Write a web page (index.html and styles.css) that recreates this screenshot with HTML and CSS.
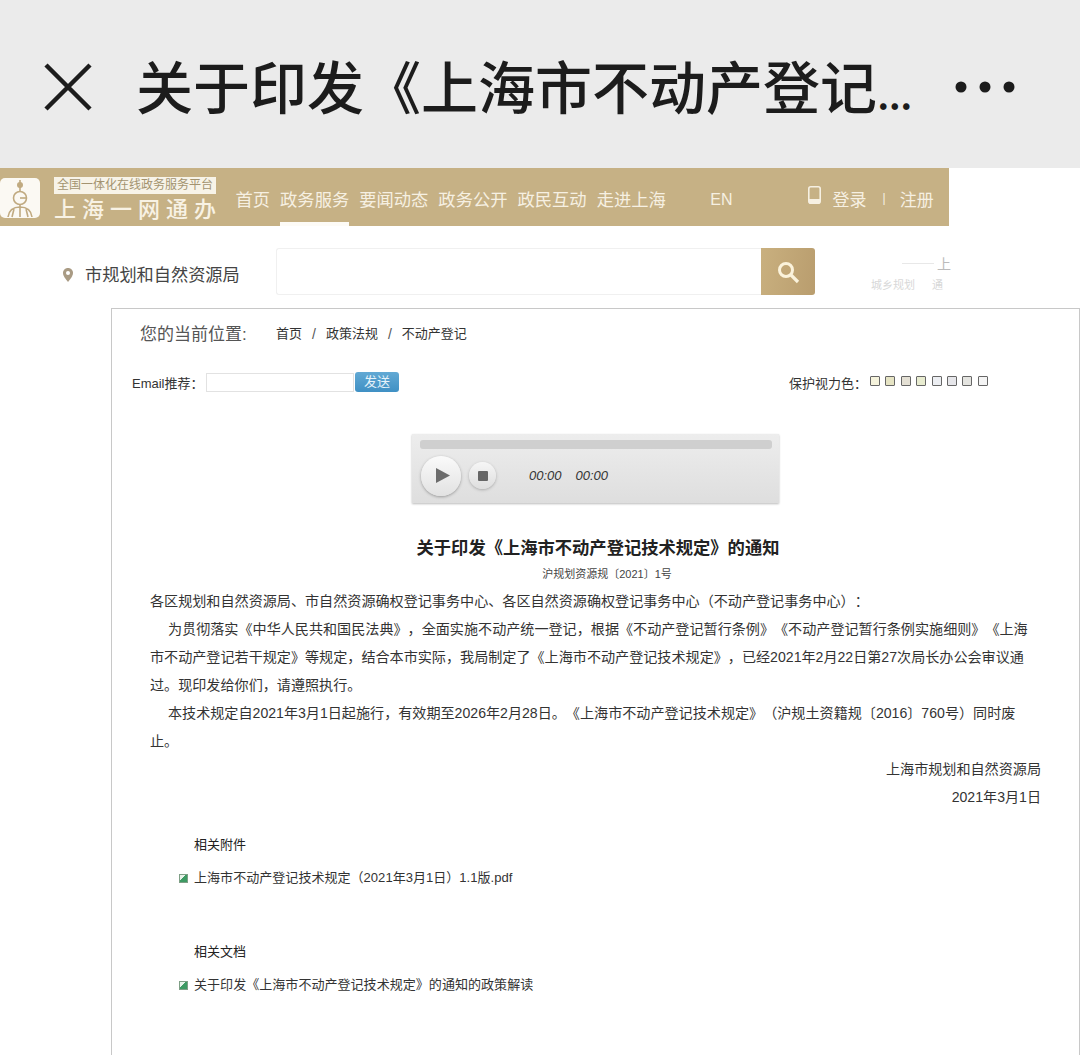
FILE: index.html
```html
<!DOCTYPE html>
<html lang="zh-CN">
<head>
<meta charset="utf-8">
<title>关于印发《上海市不动产登记技术规定》的通知</title>
<link rel="stylesheet" href="styles.css">
</head>
<body>
<div class="page">
  <header class="wx-bar">
    <svg class="wx-close" width="48" height="48" viewBox="0 0 48 48"><path d="M2 2 46 46M46 2 2 46" stroke="#1c1c1c" stroke-width="4.5" fill="none"/></svg>
    <h1 class="wx-title">关于印发《上海市不动产登记<span class="wx-dots">...</span></h1>
    <svg class="wx-more" width="60" height="12" viewBox="0 0 60 12"><circle cx="6" cy="6" r="5.5" fill="#1c1c1c"/><circle cx="30" cy="6" r="5.5" fill="#1c1c1c"/><circle cx="54" cy="6" r="5.5" fill="#1c1c1c"/></svg>
  </header>

  <nav class="site-nav">
    <div class="logo-mark">
      <svg width="40" height="40" viewBox="0 0 40 40">
        <rect width="40" height="40" rx="5" fill="#fbf9f3"/>
        <g fill="none" stroke="#c0aa80" stroke-width="1.6">
          <path d="M20 2V13"/>
          <circle cx="20" cy="7" r="2.2" fill="#c0aa80"/>
          <circle cx="20" cy="20" r="6.5"/>
          <path d="M20 20H27"/>
          <path d="M20 26V30"/>
          <path d="M8 39C9 32 14 29 20 29S31 32 32 39M20 29V39M14 31 12 39M26 31 28 39"/>
        </g>
      </svg>
    </div>
    <div class="logo-text">
      <div class="logo-label">全国一体化在线政务服务平台</div>
      <div class="logo-name">上海一网通办</div>
    </div>
    <ul class="nav-list">
      <li class="nav-item">首页</li>
      <li class="nav-item is-active">政务服务</li>
      <li class="nav-item">要闻动态</li>
      <li class="nav-item">政务公开</li>
      <li class="nav-item">政民互动</li>
      <li class="nav-item">走进上海</li>
    </ul>
    <span class="nav-en">EN</span>
    <svg class="nav-phone" width="13" height="18" viewBox="0 0 13 18"><rect x="0.8" y="0.8" width="11.4" height="16.4" rx="2" fill="none" stroke="#f6f0e2" stroke-width="1.6"/><rect x="1" y="13" width="11" height="4" fill="#f6f0e2"/></svg>
    <span class="nav-link">登录</span>
    <span class="nav-sep">|</span>
    <span class="nav-link">注册</span>
  </nav>

  <div class="search-row">
    <svg class="pin" width="10" height="14" viewBox="0 0 10 14"><path d="M5 0C2 0 0 2.200 0 5c0 3.500 5 9 5 9s5-5.500 5-9c0-2.800-2-5-5-5Z" fill="#a99b84"/><circle cx="5" cy="5" r="2" fill="#fff"/></svg>
    <span class="bureau">市规划和自然资源局</span>
    <div class="search-input"></div>
    <button class="search-btn" type="button" aria-label="搜索">
      <svg width="24" height="24" viewBox="0 0 24 24"><circle cx="10" cy="10" r="6.500" fill="none" stroke="#fbf3dc" stroke-width="3"/><path d="M15 15 22 22" stroke="#fbf3dc" stroke-width="3.200"/></svg>
    </button>
    <div class="ghost">
      <div class="ghost-top"><i class="ghost-line"></i>上</div>
      <div class="ghost-sub">城乡规划<span class="ghost-gap">通</span></div>
    </div>
  </div>

  <main class="doc">
    <div class="crumbs">
      <span class="crumbs-label">您的当前位置:</span>
      <span class="crumb">首页</span>
      <span class="crumb-sep">/</span>
      <span class="crumb">政策法规</span>
      <span class="crumb-sep">/</span>
      <span class="crumb">不动产登记</span>
    </div>

    <div class="tools">
      <label class="email-label">Email推荐：</label>
      <div class="email-input"></div>
      <button class="email-btn" type="button">发送</button>
      <span class="eye-label">保护视力色：</span>
      <div class="swatches">
        <i class="swatch s1"></i><i class="swatch s2"></i><i class="swatch s3"></i><i class="swatch s4"></i><i class="swatch s5"></i><i class="swatch s6"></i><i class="swatch s7"></i><i class="swatch s8"></i>
      </div>
    </div>

    <div class="player">
      <div class="player-track"></div>
      <div class="player-controls">
        <span class="play-btn"><svg width="14" height="15" viewBox="0 0 14 15"><path d="M0 0 14 7.500 0 15Z" fill="#6c6c6c"/></svg></span>
        <span class="stop-btn"><i class="stop-sq"></i></span>
        <span class="time time-a">00:00</span>
        <span class="time">00:00</span>
      </div>
    </div>

    <article class="article">
      <h2 class="art-title">关于印发《上海市不动产登记技术规定》的通知</h2>
      <p class="art-no">沪规划资源规〔2021〕1号</p>
      <p class="art-p">各区规划和自然资源局、市自然资源确权登记事务中心、各区自然资源确权登记事务中心（不动产登记事务中心）：</p>
      <p class="art-p indent">为贯彻落实《中华人民共和国民法典》，全面实施不动产统一登记，根据《不动产登记暂行条例》《不动产登记暂行条例实施细则》《上海市不动产登记若干规定》等规定，结合本市实际，我局制定了《上海市不动产登记技术规定》，已经2021年2月22日第27次局长办公会审议通过。现印发给你们，请遵照执行。</p>
      <p class="art-p indent">本技术规定自2021年3月1日起施行，有效期至2026年2月28日。《上海市不动产登记技术规定》（沪规土资籍规〔2016〕760号）同时废止。</p>
      <p class="art-p right">上海市规划和自然资源局</p>
      <p class="art-p right">2021年3月1日</p>
    </article>

    <section class="rel rel-a">
      <h3 class="rel-title">相关附件</h3>
      <div class="rel-item"><i class="rel-icon"></i>上海市不动产登记技术规定（2021年3月1日）1.1版.pdf</div>
    </section>
    <section class="rel rel-b">
      <h3 class="rel-title">相关文档</h3>
      <div class="rel-item"><i class="rel-icon"></i>关于印发《上海市不动产登记技术规定》的通知的政策解读</div>
    </section>
  </main>
</div>
</body>
</html>
```
FILE: styles.css
```css
* { box-sizing: border-box; }
html, body { margin: 0; padding: 0; background: #fff; }
body { font-family: "Liberation Sans", "Noto Sans CJK SC", sans-serif; color: #333; text-spacing-trim: space-all; }
.page { width: 1080px; height: 1055px; overflow: hidden; display: flex; flex-direction: column; }

.wx-bar { height: 168px; flex: none; background: #ebebeb; display: flex; align-items: center; padding: 6px 0 0 44px; }
.wx-close { flex: none; }
.wx-title { margin: 0 0 0 44px; width: 820px; flex: none; font-size: 57px; font-weight: 500; line-height: 70px; color: #1c1c1c; white-space: nowrap; font-family: "Noto Sans CJK SC", sans-serif; }
.wx-dots { font-size: 42px; letter-spacing: -1px; }
.wx-more { flex: none; margin-left: -1px; }

.site-nav { width: 949px; height: 58px; flex: none; background: #c6b185; display: flex; align-items: center; color: #f6f0e2; font-size: 17px; }
.logo-mark { width: 40px; height: 40px; flex: none; margin: 2px 14px 0 0; }
.logo-mark svg { display: block; }
.logo-text { width: 162px; flex: none; align-self: flex-start; padding-top: 9px; }
.logo-label { background: #f7f3e8; color: #a39370; font-size: 12px; line-height: 17px; height: 17px; text-align: center; white-space: nowrap; }
.logo-name { font-size: 22px; line-height: 26px; letter-spacing: 6px; white-space: nowrap; color: #f8f2e4; font-weight: 500; font-family: "Noto Sans CJK SC", sans-serif; }
.nav-list { list-style: none; margin: 0 0 0 19.500px; padding: 0; display: flex; gap: 10px; height: 58px; align-items: center; flex: none; font-size: 17.300px; }
.nav-item { height: 58px; line-height: 64px; position: relative; white-space: nowrap; }
.is-active::after { content: ""; position: absolute; left: 0; right: 0; bottom: 0; height: 4px; background: #fdfbf6; }
.nav-en { margin-left: 44.500px; font-size: 16px; margin-top: 5px; }
.nav-phone { margin-left: 75px; margin-right: 12px; margin-top: -4px; flex: none; }
.nav-link { margin-top: 2px; white-space: nowrap; }
.nav-sep { margin: 2px 14px 0 16px; font-size: 12px; }

.search-row { height: 82px; flex: none; display: flex; align-items: flex-start; padding-top: 22px; }
.pin { margin: 20px 0 0 63px; flex: none; }
.bureau { margin: 13px 0 0 12px; font-size: 17.200px; line-height: 28px; color: #444; width: 191px; flex: none; white-space: nowrap; }
.search-input { width: 485px; height: 47px; flex: none; border: 1px solid #f0f0f0; border-right: 0; border-radius: 3px 0 0 3px; }
.search-btn { width: 54px; height: 47px; flex: none; border: 0; padding: 0; border-radius: 0 3px 3px 0; background: linear-gradient(100deg, #c9b07f, #b99d6e); display: flex; align-items: center; justify-content: center; }
.ghost { margin: 4px 0 0 56px; width: 80px; flex: none; color: #d8d8d8; }
.ghost-top { display: flex; align-items: center; justify-content: flex-end; gap: 3px; height: 22px; font-size: 14px; color: #bbb; }
.ghost-line { width: 32px; height: 1px; background: #e8e8e8; }
.ghost-sub { font-size: 11px; line-height: 16px; white-space: nowrap; margin-top: 3px; }
.ghost-gap { margin-left: 17px; }

.doc { margin-left: 111px; flex: 1 0 auto; border: 1px solid #c8c8c8; border-bottom: 0; position: relative; }
.crumbs { height: 46px; display: flex; align-items: center; padding-left: 28px; font-size: 13px; color: #333; }
.crumbs-label { font-size: 17px; color: #555; width: 136px; flex: none; white-space: nowrap; }
.crumb-sep { margin: 3px 10px 0; font-size: 14px; color: #555; }

.tools { height: 54px; display: flex; align-items: center; padding-left: 20px; font-size: 13px; }
.email-label { width: 74px; flex: none; white-space: nowrap; }
.email-input { width: 148px; height: 19px; flex: none; border: 1px solid #e2e2e2; }
.email-btn { width: 44px; height: 20px; margin-left: 1px; flex: none; border: 0; border-radius: 3px; padding: 0; font: inherit; line-height: 20px; color: #e6f3fa; background: linear-gradient(#62a9d4, #3f90c4); }
.eye-label { margin-left: 390px; width: 81px; flex: none; white-space: nowrap; }
.swatches { display: flex; gap: 5.400px; margin-top: -3px; }
.swatch { width: 10px; height: 10px; border: 1px solid #666; border-radius: 1px; }
.s1 { background: #f5f3dc; }
.s2 { background: #e6e4c4; }
.s3 { background: #e4e0d4; }
.s4 { background: #e8ecd0; }
.s5 { background: #eceef2; }
.s6 { background: #e6e6ea; }
.s7 { background: #e4e4e0; }
.s8 { background: #f4f4f4; }

.player { width: 367px; height: 69px; margin: 25px 0 0 300px; background: linear-gradient(#ededed, #dedede); box-shadow: 0 1px 2px #bbb; padding: 6px 7px 0 8px; }
.player-track { height: 9px; background: #cfcfcf; border-radius: 3px; }
.player-controls { display: flex; align-items: center; height: 53px; margin-top: 0; padding-left: 1px; }
.play-btn { width: 40px; height: 40px; flex: none; border-radius: 50%; background: linear-gradient(#fafafa, #e2e2e2); box-shadow: 0 1px 3px #999; display: flex; align-items: center; justify-content: center; padding-left: 3px; }
.stop-btn { width: 27px; height: 27px; flex: none; margin-left: 8px; border-radius: 50%; background: linear-gradient(#f6f6f6, #dedede); box-shadow: 0 1px 3px #aaa; display: flex; align-items: center; justify-content: center; }
.stop-sq { width: 10px; height: 10px; background: #666; border-radius: 1px; }
.time { font-size: 13px; font-style: italic; color: #333; margin-left: 14px; }
.time-a { margin-left: 33px; }

.article { margin: 0; padding: 31px 38px 0; }
.art-title { margin: 0; font-size: 17.300px; line-height: 28px; font-weight: 700; text-align: center; color: #222; padding-left: 5px; }
.art-no { margin: 0; font-size: 11px; line-height: 25px; text-align: center; color: #444; padding-left: 23px; }
.art-p { margin: 0; font-size: 14.100px; line-height: 28px; color: #333; }
.indent { text-indent: 18px; padding-right: 10px; }
.right { text-align: right; }

.rel { padding-left: 67px; position: relative; font-size: 13.050px; color: #333; }
.rel-a { margin-top: 20px; }
.rel-b { margin-top: 46px; }
.rel-title { margin: 0 0 0 15px; font-size: 13px; line-height: 28px; font-weight: 400; color: #222; }
.rel-item { margin-top: 5px; line-height: 28px; display: flex; align-items: center; white-space: nowrap; }
.rel-icon { width: 9px; height: 9px; margin-right: 6px; flex: none; border: 1px solid #7f9f86; background: linear-gradient(135deg, #e8f3ea 40%, #3d9a63 40%); }
```
